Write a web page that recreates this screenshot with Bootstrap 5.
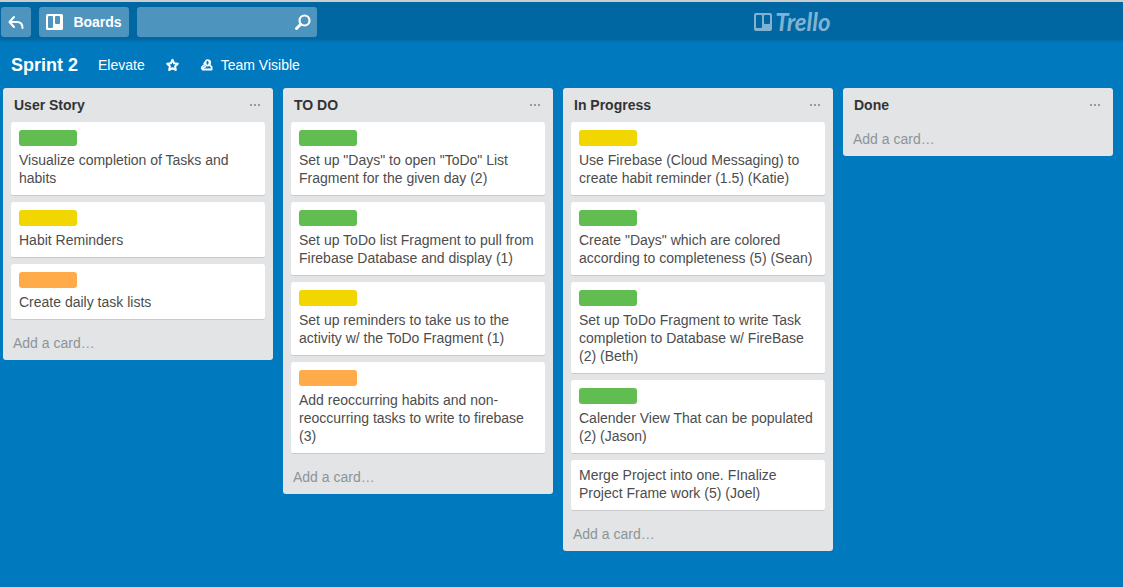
<!DOCTYPE html>
<html lang="en">
<head>
<meta charset="utf-8">
<meta name="viewport" content="width=device-width, initial-scale=1">
<title>Sprint 2 | Trello</title>
<link href="https://cdn.jsdelivr.net/npm/bootstrap@5.3.0/dist/css/bootstrap.min.css" rel="stylesheet">
<style>
  body { background: #0079bf; font-family: "Liberation Sans", Arial, sans-serif; font-size: 14px; line-height: 18px; color: #4d4d4d; }
  .topbar { background: linear-gradient(#0067a3 calc(100% - 4px), #0079bf); border-top: 2px solid #c9cfd1; padding: 5px 1px 6px; gap: 8px; }
  .topbar .btn, .search-box { height: 30px; background: #4d95bf; color: #fff; border: 0; border-radius: 3px; }
  .topbar .btn { font-size: 14px; line-height: 18px; }
  .back-btn { width: 30px; }
  .boards-btn { width: 90px; gap: 10px; }
  .search-box { width: 180px; padding-right: 5px; }
  .search-box input { min-width: 0; box-shadow: none !important; background: transparent !important; color: #fff; font-size: 14px; }
  .brand-area { padding-right: 26%; }
  .brand-link { color: #80b3d1; gap: 3px; }
  .brand-word { font: italic 700 24px/24px Lato, "Liberation Sans", sans-serif; }
  .board-head { height: 45px; padding: 0 11px 2px; color: #fff; }
  .board-head h1 { font-size: 18px; line-height: 24px; margin: 0 20px 0 0; }
  .board-head a, .board-head button { color: #fff; }
  .visibility { gap: 7px; }
  .board { gap: 10px; padding: 0 3px 8px; overflow-x: auto; }
  .board-list { width: 270px; background: #e2e4e6; border-radius: 3px; }
  .list-head { height: 34px; padding: 0 10px 0 11px; }
  .list-head h2 { font-size: 14px; line-height: 18px; color: #333; }
  .menu-btn { color: #999; line-height: 0; }
  .task { background: #fff; border-radius: 3px; border-bottom: 1px solid #c7c9cb; margin: 0 8px 6px; padding: 6px 8px 8px; }
  .tag { width: 58px; height: 16px; border-radius: 3px; margin: 2px 0 5px; }
  .tag-green { background: #61bd4f; }
  .tag-yellow { background: #f2d600; }
  .tag-orange { background: #ffab4a; }
  .add-link { color: #8c9499; padding: 8px 10px; }
</style>
</head>
<body>
<header class="topbar d-flex align-items-center">
  <button class="btn back-btn p-0 d-flex align-items-center justify-content-center" type="button" aria-label="Back">
    <svg width="16" height="14" viewBox="0 0 16 14" fill="none" stroke="currentColor" stroke-width="2"><path d="M6 2 1.500 7 6 12M2 7h7Q14.500 7 14.500 13" stroke-linecap="round" stroke-linejoin="round"/></svg>
  </button>
  <button class="btn boards-btn p-0 d-flex align-items-center justify-content-center fw-bold" type="button">
    <svg width="17" height="16" viewBox="0 0 17 16"><path fill="#fff" fill-rule="evenodd" d="M1.500 0h14A1.500 1.500 0 0 1 17 1.500v13a1.500 1.500 0 0 1-1.500 1.500h-14A1.500 1.500 0 0 1 0 14.500v-13A1.500 1.500 0 0 1 1.500 0zM3 2q-1 0-1 1v10q0 1 1 1h3q1 0 1-1V3q0-1-1-1zM10 2q-1 0-1 1v6q0 1 1 1h3q1 0 1-1V3q0-1-1-1z"/></svg>
    <span>Boards</span>
  </button>
  <form class="search-box d-flex align-items-center">
    <input class="form-control border-0 p-1" type="text" aria-label="Search">
    <svg class="flex-shrink-0" width="18" height="17" viewBox="0 0 18 17" fill="none" stroke="#fff"><circle cx="10.500" cy="6.500" r="5" stroke-width="2.200"/><path d="M6.700 10.300 2.500 14.500" stroke-width="3" stroke-linecap="round"/></svg>
  </form>
  <div class="brand-area flex-grow-1 d-flex justify-content-end">
    <a class="brand-link d-flex align-items-center text-decoration-none" href="#" aria-label="Trello">
      <svg width="18" height="18" viewBox="0 0 18 18"><path fill="currentColor" fill-rule="evenodd" d="M2 0h14a2 2 0 0 1 2 2v14a2 2 0 0 1-2 2H2a2 2 0 0 1-2-2V2a2 2 0 0 1 2-2zM3 2a1 1 0 0 0-1 1v11a1 1 0 0 0 1 1h4a1 1 0 0 0 1-1V3a1 1 0 0 0-1-1zM11 2a1 1 0 0 0-1 1v7a1 1 0 0 0 1 1h4a1 1 0 0 0 1-1V3a1 1 0 0 0-1-1z"/></svg>
      <span class="brand-word">Trello</span>
    </a>
  </div>
</header>

<nav class="board-head d-flex align-items-center" aria-label="Board">
  <h1 class="fw-bold">Sprint 2</h1>
  <a class="text-decoration-none me-3 pe-1" href="#">Elevate</a>
  <button class="btn border-0 p-0 d-flex me-3 pe-1" type="button" aria-label="Star board">
    <svg width="15" height="14" viewBox="0 0 15 14" fill="none" stroke="currentColor" stroke-width="2" stroke-linejoin="round"><path d="m7.500 1.800 1.600 3.400 3.700.5-2.700 2.600.7 3.700-3.300-1.800-3.300 1.800.7-3.700-2.700-2.600 3.700-.5z"/></svg>
  </button>
  <a class="visibility d-flex align-items-center text-decoration-none" href="#">
    <svg width="14" height="14" viewBox="0 0 14 14" fill="none" stroke="currentColor"><ellipse cx="7.500" cy="4.800" rx="2" ry="2.800" stroke-width="1.700"/><path d="M9 2.200Q11 3.500 9.600 6.800L11.600 9V11.500H2.500V10L6 8.500" stroke-width="1.800" stroke-linejoin="round"/><path d="M5 4Q3.500 5 4.300 7L2.200 8.500 1.500 11" stroke-width="1.500"/></svg>
    <span>Team Visible</span>
  </a>
</nav>

<main class="board d-flex align-items-start">
  <section class="board-list flex-shrink-0">
    <div class="list-head d-flex align-items-center justify-content-between">
      <h2 class="fw-bold m-0">User Story</h2>
      <button class="btn border-0 p-0 menu-btn" type="button" aria-label="List actions"><svg width="14" height="4" viewBox="0 0 14 4" fill="currentColor"><path d="M1 1h2v2H1zM5 1h2v2H5zM9 1h2v2H9z"/></svg></button>
    </div>
    <article class="task"><div class="tag tag-green"></div>Visualize completion of Tasks and habits</article>
    <article class="task"><div class="tag tag-yellow"></div>Habit Reminders</article>
    <article class="task"><div class="tag tag-orange"></div>Create daily task lists</article>
    <a class="add-link d-block text-decoration-none" href="#">Add a card…</a>
  </section>

  <section class="board-list flex-shrink-0">
    <div class="list-head d-flex align-items-center justify-content-between">
      <h2 class="fw-bold m-0">TO DO</h2>
      <button class="btn border-0 p-0 menu-btn" type="button" aria-label="List actions"><svg width="14" height="4" viewBox="0 0 14 4" fill="currentColor"><path d="M1 1h2v2H1zM5 1h2v2H5zM9 1h2v2H9z"/></svg></button>
    </div>
    <article class="task"><div class="tag tag-green"></div>Set up "Days" to open "ToDo" List Fragment for the given day (2)</article>
    <article class="task"><div class="tag tag-green"></div>Set up ToDo list Fragment to pull from Firebase Database and display (1)</article>
    <article class="task"><div class="tag tag-yellow"></div>Set up reminders to take us to the activity w/ the ToDo Fragment (1)</article>
    <article class="task"><div class="tag tag-orange"></div>Add reoccurring habits and non-reoccurring tasks to write to firebase (3)</article>
    <a class="add-link d-block text-decoration-none" href="#">Add a card…</a>
  </section>

  <section class="board-list flex-shrink-0">
    <div class="list-head d-flex align-items-center justify-content-between">
      <h2 class="fw-bold m-0">In Progress</h2>
      <button class="btn border-0 p-0 menu-btn" type="button" aria-label="List actions"><svg width="14" height="4" viewBox="0 0 14 4" fill="currentColor"><path d="M1 1h2v2H1zM5 1h2v2H5zM9 1h2v2H9z"/></svg></button>
    </div>
    <article class="task"><div class="tag tag-yellow"></div>Use Firebase (Cloud Messaging) to create habit reminder (1.5) (Katie)</article>
    <article class="task"><div class="tag tag-green"></div>Create "Days" which are colored according to completeness (5) (Sean)</article>
    <article class="task"><div class="tag tag-green"></div>Set up ToDo Fragment to write Task completion to Database w/ FireBase (2) (Beth)</article>
    <article class="task"><div class="tag tag-green"></div>Calender View That can be populated (2) (Jason)</article>
    <article class="task">Merge Project into one. FInalize Project Frame work (5) (Joel)</article>
    <a class="add-link d-block text-decoration-none" href="#">Add a card…</a>
  </section>

  <section class="board-list flex-shrink-0">
    <div class="list-head d-flex align-items-center justify-content-between">
      <h2 class="fw-bold m-0">Done</h2>
      <button class="btn border-0 p-0 menu-btn" type="button" aria-label="List actions"><svg width="14" height="4" viewBox="0 0 14 4" fill="currentColor"><path d="M1 1h2v2H1zM5 1h2v2H5zM9 1h2v2H9z"/></svg></button>
    </div>
    <a class="add-link d-block text-decoration-none" href="#">Add a card…</a>
  </section>
</main>
<script src="https://cdn.jsdelivr.net/npm/bootstrap@5.3.0/dist/js/bootstrap.bundle.min.js"></script>
</body>
</html>
